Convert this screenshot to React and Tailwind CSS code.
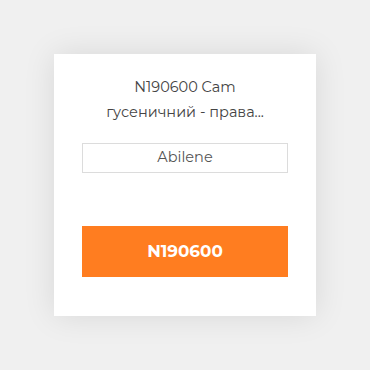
import React from "react";

const App = () => {
  return (
    <div className="w-[370px] h-[370px] bg-[#f0f0f0] flex items-start justify-center pt-[54px] font-['Montserrat','Inter','Noto_Sans',sans-serif]">
      <div className="w-[262px] h-[262px] bg-white shadow-[0_0_30px_rgba(0,0,0,0.1)] px-[28px] pt-[21px] flex flex-col">
        <h3 className="text-center text-[14.5px] leading-[25px] text-[#444] font-normal">
          N190600 Cam
          <br />
          гусеничний - права...
        </h3>
        <div className="mt-[18px] h-[30px] border border-[#dcdcdc] flex items-center justify-center text-[14.5px] text-[#555]">
          Abilene
        </div>
        <button className="mt-[53px] h-[51px] w-full bg-[#ff7d20] text-white text-[16.8px] font-bold">
          N190600
        </button>
      </div>
    </div>
  );
};

export default App;
